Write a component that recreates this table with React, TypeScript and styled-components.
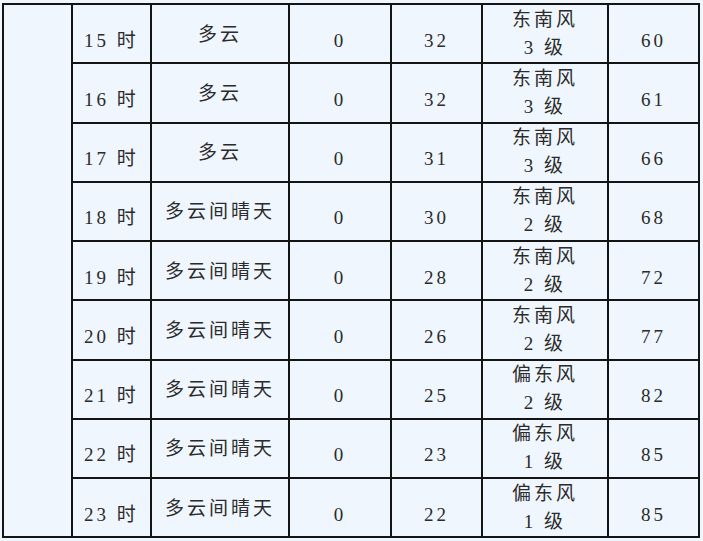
import React from 'react';
import styled, { createGlobalStyle } from 'styled-components';

const GlobalStyle = createGlobalStyle`
  html, body {
    margin: 0;
    padding: 0;
    background: #eff6fd;
  }
  body {
    font-family: 'Liberation Serif', 'Noto Sans CJK SC', serif;
    color: #2b2b2b;
  }
`;

type Row = {
  hour: number;
  sky: string;
  rain: number;
  temp: number;
  wind: string;
  level: number;
  humidity: number;
};

const rows: Row[] = [
  { hour: 15, sky: '多云', rain: 0, temp: 32, wind: '东南风', level: 3, humidity: 60 },
  { hour: 16, sky: '多云', rain: 0, temp: 32, wind: '东南风', level: 3, humidity: 61 },
  { hour: 17, sky: '多云', rain: 0, temp: 31, wind: '东南风', level: 3, humidity: 66 },
  { hour: 18, sky: '多云间晴天', rain: 0, temp: 30, wind: '东南风', level: 2, humidity: 68 },
  { hour: 19, sky: '多云间晴天', rain: 0, temp: 28, wind: '东南风', level: 2, humidity: 72 },
  { hour: 20, sky: '多云间晴天', rain: 0, temp: 26, wind: '东南风', level: 2, humidity: 77 },
  { hour: 21, sky: '多云间晴天', rain: 0, temp: 25, wind: '偏东风', level: 2, humidity: 82 },
  { hour: 22, sky: '多云间晴天', rain: 0, temp: 23, wind: '偏东风', level: 1, humidity: 85 },
  { hour: 23, sky: '多云间晴天', rain: 0, temp: 22, wind: '偏东风', level: 1, humidity: 85 },
];

const widths = [69, 79, 138, 102, 91, 126, 91];

const App = () => {
  return (
    <Page>
      <GlobalStyle />
      <Table>
        <colgroup>
          {widths.map((w, i) => (
            <col key={i} style={{ width: w }} />
          ))}
        </colgroup>
        <tbody>
          {rows.map((r, i) => (
            <Tr key={r.hour}>
              {i === 0 && <Side rowSpan={rows.length} />}
              <Cell $low>{r.hour} 时</Cell>
              <Cell>{r.sky}</Cell>
              <Cell $low>{r.rain}</Cell>
              <Cell $low>{r.temp}</Cell>
              <Cell $tight>
                <Line>{r.wind}</Line>
                <Line>{r.level} 级</Line>
              </Cell>
              <Cell $low>{r.humidity}</Cell>
            </Tr>
          ))}
        </tbody>
      </Table>
    </Page>
  );
};

export default App;

const Page = styled.div`
  padding: 3px 0 0 2px;
  min-height: 541px;
  box-sizing: border-box;
`;

const Table = styled.table`
  border-collapse: collapse;
  table-layout: fixed;
  width: 698px;
`;

const Tr = styled.tr`
  height: 59.25px;
`;

const Side = styled.td`
  border: 2px solid #141414;
  padding: 0;
`;

const Cell = styled.td<{ $low?: boolean; $tight?: boolean }>`
  border: 2px solid #141414;
  padding: ${({ $low, $tight }) => ($low ? '14px 0 0' : $tight ? '0' : '2px 0 0')};
  text-align: center;
  vertical-align: middle;
  font-size: 19px;
  letter-spacing: 3px;
  line-height: 28px;
  white-space: nowrap;
`;

const Line = styled.div`
  line-height: 28px;
`;
